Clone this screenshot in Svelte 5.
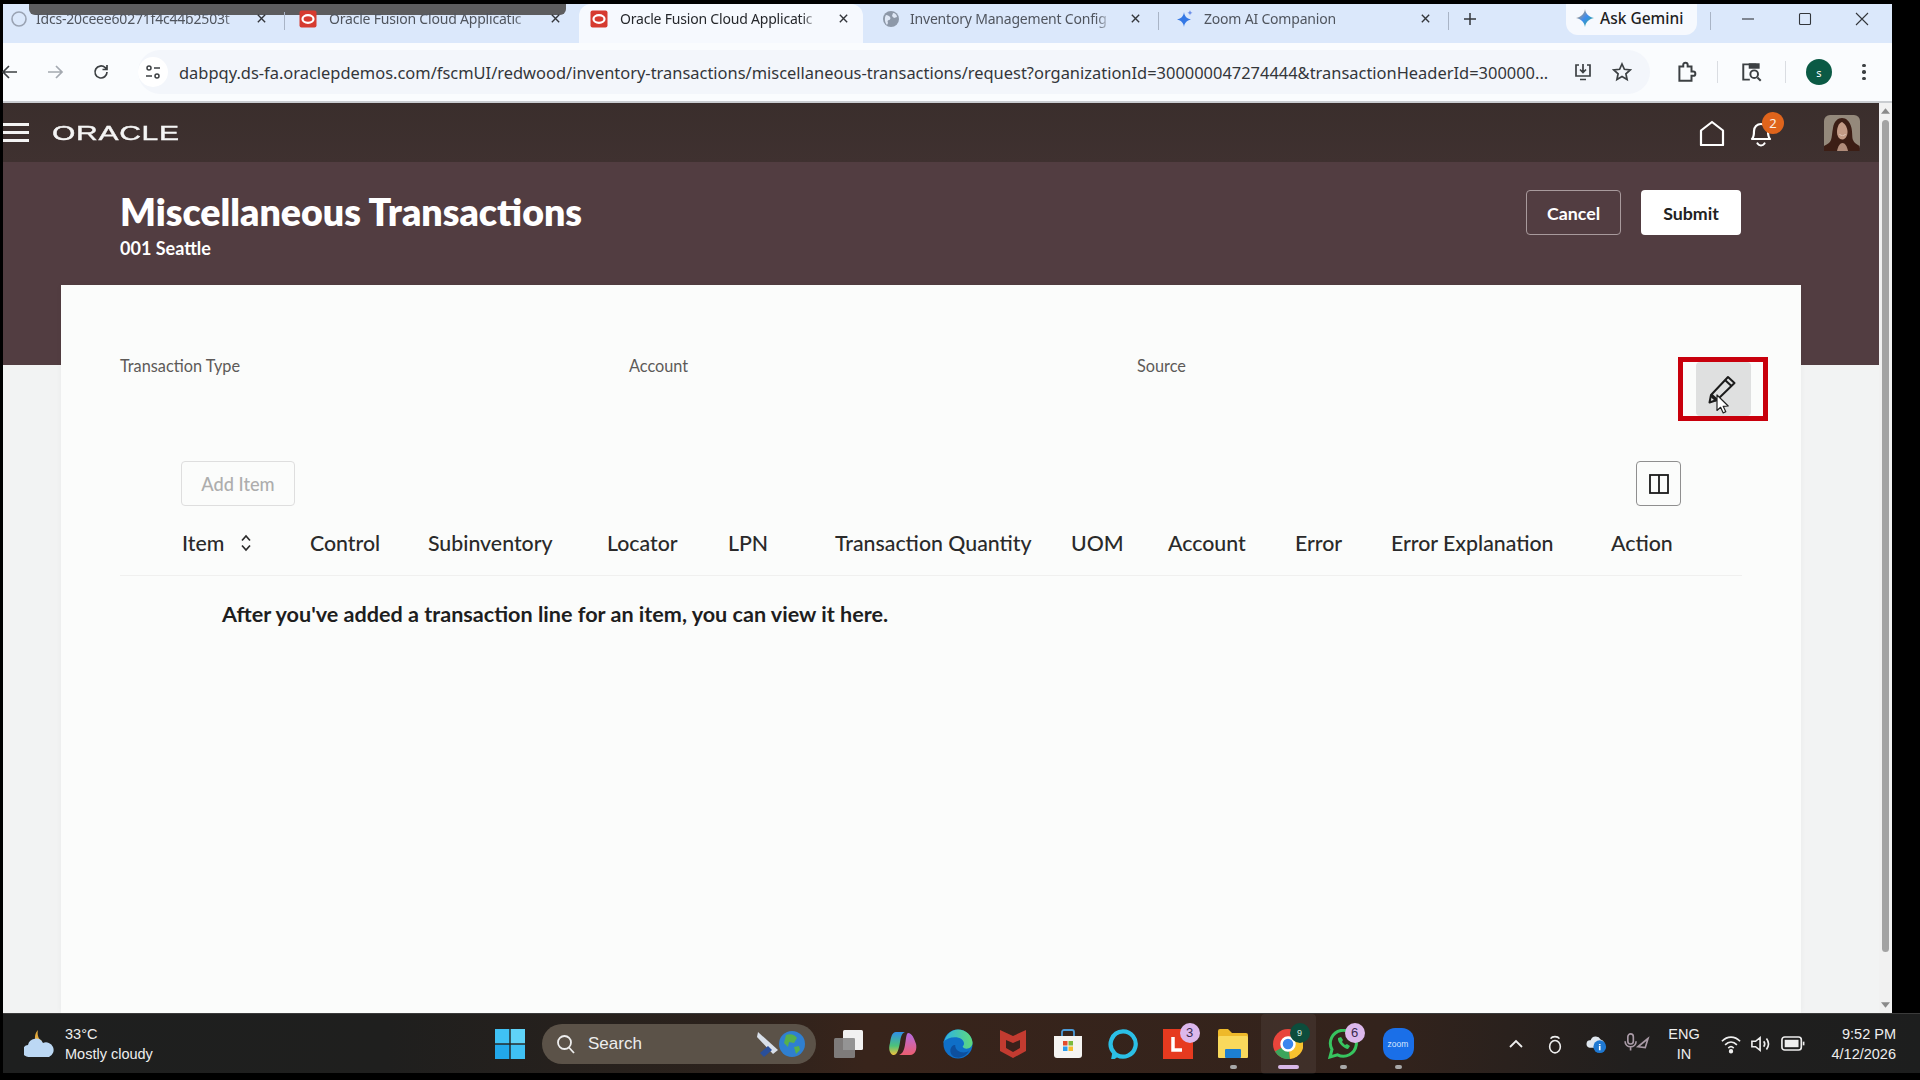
<script>
  const tabs = [
    { title: 'Idcs-20ceee60271f4c44b2503t', icon: 'ring', width: 282, pad: 7, gap: 8, sep: true },
    { title: 'Oracle Fusion Cloud Applicatic', icon: 'oracle', width: 294, pad: 14, gap: 12 },
    { title: 'Oracle Fusion Cloud Applicatic', icon: 'oracle', width: 284, pad: 11, gap: 12, active: true },
    { title: 'Inventory Management Config', icon: 'globe', width: 296, pad: 19, gap: 10, sep: true },
    { title: 'Zoom AI Companion', icon: 'spark', width: 290, pad: 17, gap: 10, sep: true }
  ];

  const columns = [
    { label: 'Item', sort: true },
    { label: 'Control' },
    { label: 'Subinventory' },
    { label: 'Locator' },
    { label: 'LPN' },
    { label: 'Transaction Quantity' },
    { label: 'UOM' },
    { label: 'Account' },
    { label: 'Error' },
    { label: 'Error Explanation' },
    { label: 'Action' }
  ];

  const url =
    'dabpqy.ds-fa.oraclepdemos.com/fscmUI/redwood/inventory-transactions/miscellaneous-transactions/request?organizationId=300000047274444&transactionHeaderId=300000...';
</script>

<div class="screen">
  <div class="chrome">
    <div class="tabstrip">
      <div class="share-bar"></div>
      {#each tabs as tab}
        <div class="tab" class:active={tab.active} class:sep={tab.sep} style="width:{tab.width}px;padding-left:{tab.pad}px;gap:{tab.gap}px">
          {#if tab.icon === 'oracle'}
            <svg class="fav" viewBox="0 0 18 18"><rect x="0.5" y="0.5" width="17" height="17" rx="2" fill="#d63b30" /><ellipse cx="9" cy="9" rx="5.5" ry="3.8" fill="none" stroke="#fff" stroke-width="2.2" /></svg>
          {:else if tab.icon === 'ring'}
            <svg class="fav" viewBox="0 0 18 18"><circle cx="9" cy="9" r="7" fill="none" stroke="#9aa3b3" stroke-width="1.6" /></svg>
          {:else if tab.icon === 'globe'}
            <svg class="fav" viewBox="0 0 18 18"><circle cx="9" cy="9" r="8" fill="#8d98a8" /><path d="M4 5c2 0 3 1 4 2s0 3-1 3-2 1-1 3l-1 2C3 13 2 8 4 5zM11 3c2 0 4 2 4 4l-3 1-2-2z" fill="#dfe8f6" /></svg>
          {:else}
            <svg class="fav" viewBox="0 0 18 18"><path d="M8 2c.5 4 2.500 6.500 7 7.500-4.500 1-6.500 3.500-7 7.500-.5-4-2.500-6.500-7-7.500 4.500-1 6.500-3.500 7-7.500z" fill="#3478e5" /><path d="M14 0c.2 1.600 1 2.400 2.500 2.800-1.500.4-2.300 1.200-2.500 2.700-.2-1.500-1-2.300-2.500-2.700 1.500-.4 2.300-1.200 2.500-2.800z" fill="#6d8fe8" /></svg>
          {/if}
          <span class="tab-title">{tab.title}</span>
          <svg class="tab-x" viewBox="0 0 12 12"><path d="M2 2l8 8M10 2l-8 8" /></svg>
        </div>
      {/each}
      <svg class="plus" viewBox="0 0 14 14"><path d="M7 1v12M1 7h12" /></svg>
      <div class="gemini">
        <svg viewBox="0 0 18 18" width="18" height="18">
          <defs><linearGradient id="gem" x1="0" y1="0" x2="1" y2="1"><stop offset="0" stop-color="#f2a33a" /><stop offset="0.5" stop-color="#3c8cf0" /><stop offset="1" stop-color="#2fb36c" /></linearGradient></defs>
          <path d="M9 0c.7 4.800 3.400 7.600 9 9-5.600 1.400-8.300 4.200-9 9-.7-4.800-3.400-7.600-9-9 5.600-1.400 8.300-4.200 9-9z" fill="url(#gem)" />
        </svg>
        <span>Ask Gemini</span>
      </div>
      <div class="win-sep"></div>
      <div class="win-btns">
        <svg viewBox="0 0 14 14"><path d="M1 7h12" /></svg>
        <svg viewBox="0 0 14 14"><rect x="1.500" y="1.500" width="11" height="11" rx="1" /></svg>
        <svg viewBox="0 0 14 14"><path d="M1 1l12 12M13 1L1 13" /></svg>
      </div>
    </div>

    <div class="toolbar">
      <div class="nav-btns">
        <svg viewBox="0 0 18 18" class="back"><path d="M16 9H2M8 3L2 9l6 6" /></svg>
        <svg viewBox="0 0 18 18" class="forward"><path d="M2 9h14M10 3l6 6-6 6" /></svg>
        <svg viewBox="0 0 18 18" class="reload"><path d="M15 9a6 6 0 1 1-1.800-4.300L15 6.500M15 2v4.500h-4.500" /></svg>
      </div>
      <div class="omnibox">
        <span class="tune">
          <svg viewBox="0 0 16 16" width="16" height="16"><circle cx="4" cy="4" r="2" /><path d="M9 4h6M1 12h6" /><circle cx="12" cy="12" r="2" /></svg>
        </span>
        <span class="url">{url}</span>
        <svg class="omni-ico" viewBox="0 0 20 20"><path d="M6 3H3v11h14V3h-3M10 2v8M7 7.500l3 3 3-3M7 17.500h6" /></svg>
        <svg class="omni-ico star" viewBox="0 0 20 20"><path d="M10 2l2.400 5.300 5.800.6-4.300 3.900 1.200 5.700L10 14.600l-5.100 2.900 1.200-5.700L1.800 7.900l5.800-.6z" /></svg>
      </div>
      <div class="tool-right">
        <svg class="ext" viewBox="0 0 20 20"><path d="M4 5h3.500V3.500a2 2 0 0 1 4 0V5H15v4.500h1.500a2 2 0 0 1 0 4H15V18H4z" /></svg>
        <i class="tool-sep"></i>
        <svg class="panel" viewBox="0 0 22 20"><path d="M9 17H3V3h11v1" /><rect x="8" y="2" width="10" height="5" fill="#3c4043" stroke="none" /><circle cx="13" cy="12" r="3.500" /><path d="M16 15l3 3" /></svg>
        <i class="tool-sep second"></i>
        <span class="profile">s</span>
        <span class="dots"><i></i><i></i><i></i></span>
      </div>
    </div>

    <div class="app">
      <div class="page">
        <header class="topbar">
          <div class="burger"><i></i><i></i><i></i></div>
          <span class="logo">ORACLE</span>
          <div class="top-icons">
            <svg class="home" viewBox="0 0 26 26"><path d="M2 25V10.500L13 2l11 8.500V25z" /></svg>
            <span class="bell">
              <svg viewBox="0 0 26 28"><path d="M4 20c2-2 2-4 2-8 0-4 3-7 7-7s7 3 7 7c0 4 0 6 2 8zM9.500 24.500c1 1.500 2.200 2 3.500 2s2.500-.5 3.500-2" /></svg>
              <span class="badge">2</span>
            </span>
            <svg class="avatar" viewBox="0 0 36 36">
              <rect width="36" height="36" rx="6" fill="#94897b" />
              <path d="M0 36V31c3-2 6-3 7-6 1-3 1-7 2-12 1-7 5-10 9-10s8 3 9.500 10c1 5 .5 10 1.500 12 1 3 4 4 6.500 6v5z" fill="#3c1e15" />
              <path d="M13 17c0-5 2-9 5-10 2 1 5 4 5.500 9 .3 4-1.500 8-5 8.500-3 .2-5.500-3-5.500-7.500z" fill="#c39a85" />
              <path d="M15 19c2 1.500 5 1.500 7 0-1 2-6 2-7 0z" fill="#f2e6de" />
              <path d="M13 36c1-5 3-8 5.500-8s4.500 3 5.500 8z" fill="#b08c7a" />
            </svg>
          </div>
        </header>

        <section class="hero">
          <div>
            <h1>Miscellaneous Transactions</h1>
            <p class="org">001 Seattle</p>
          </div>
          <div class="hero-actions">
            <button class="btn-outline">Cancel</button>
            <button class="btn-solid">Submit</button>
          </div>
        </section>

        <main class="card">
          <div class="fields">
            <div class="labels">
              <span>Transaction Type</span>
              <span>Account</span>
              <span>Source</span>
            </div>
            <div class="callout">
              <div class="edit-btn">
                <svg viewBox="0 0 55 54" width="55" height="54">
                  <path d="M32 15l6.500 6L21 38l-7.500 2.500L15 33z" fill="none" stroke="#1c1c1c" stroke-width="2" stroke-linejoin="round" />
                  <path d="M29 18l6.500 6" stroke="#1c1c1c" stroke-width="2" />
                  <path d="M15 33l6 5.500" stroke="#1c1c1c" stroke-width="3.500" />
                  <path d="M21 33v15.500l3.600-3.200 2.600 5.600 2.600-1.200-2.600-5.400 5-.3z" fill="#fff" stroke="#222" stroke-width="1.200" stroke-linejoin="round" />
                </svg>
              </div>
            </div>
          </div>

          <div class="actions">
            <button class="add-item">Add Item</button>
            <button class="col-btn" aria-label="Columns">
              <svg viewBox="0 0 20 20" width="20" height="20"><rect x="1" y="1" width="18" height="18" /><path d="M10 1v18" /></svg>
            </button>
          </div>

          <div class="thead">
            {#each columns as col}
              <div class="th">
                {col.label}
                {#if col.sort}
                  <svg class="sort" viewBox="0 0 12 18"><path d="M2 6.500L6 2l4 4.500M2 11.500L6 16l4-4.500" /></svg>
                {/if}
              </div>
            {/each}
          </div>
          <p class="empty">After you've added a transaction line for an item, you can view it here.</p>
        </main>
      </div>

      <div class="scrollbar">
        <svg viewBox="0 0 10 6" class="arrow"><path d="M5 0l5 6H0z" /></svg>
        <div class="thumb"></div>
        <svg viewBox="0 0 10 6" class="arrow"><path d="M0 0h10L5 6z" /></svg>
      </div>
    </div>
  </div>

  <footer class="taskbar">
    <div class="weather">
      <svg viewBox="0 0 32 30" width="32" height="30">
        <path d="M14 1c-3 3-4 8-2 12l6-1C14 10 13 5 14 1z" fill="#e2a83c" />
        <path d="M5 28a6 6 0 0 1-1-12 8 8 0 0 1 15-2 7 7 0 0 1 6 14z" fill="#bcd8f4" />
      </svg>
      <div class="weather-text"><span>33°C</span><span>Mostly cloudy</span></div>
    </div>

    <svg class="winlogo" viewBox="0 0 30 30">
      <rect width="14.300" height="14.300" fill="#3fc1f4" />
      <rect x="15.700" width="14.300" height="14.300" fill="#5fd3f8" />
      <rect y="15.700" width="14.300" height="14.300" fill="#22a8ea" />
      <rect x="15.700" y="15.700" width="14.300" height="14.300" fill="#3fc1f4" />
    </svg>

    <div class="search">
      <svg viewBox="0 0 20 20" width="20" height="20"><circle cx="8.500" cy="8.500" r="6.500" /><path d="M13 13.500l5 5.500" /></svg>
      <span>Search</span>
      <svg class="search-art" viewBox="0 0 50 30" width="50" height="30">
        <path d="M2 3l20 18-5 4L1 8z" fill="#d9e0ea" />
        <path d="M4 24l8-7 4 4-8 7z" fill="#2a4f9a" />
        <circle cx="36" cy="15" r="13" fill="#2f7fd0" />
        <path d="M30 6c5-2 9 0 11 3l-3 5-5-1-1 5-4-4zM38 18l5-1 1 4-4 4z" fill="#56b04c" />
      </svg>
    </div>

    <div class="apps">
      <span class="app-slot">
        <svg viewBox="0 0 30 30"><rect x="10" y="1" width="20" height="20" rx="1.500" fill="#f1f1f1" /><rect x="10" y="9" width="12" height="12" fill="#c9c9c9" /><rect x="1" y="9" width="21" height="20" rx="1.500" fill="#8b8b8b" opacity="0.850" /></svg>
      </span>
      <span class="app-slot">
        <svg viewBox="0 0 30 30">
          <defs>
            <linearGradient id="cpa" x1="0" y1="0" x2="0" y2="1"><stop offset="0" stop-color="#2f8fe8" /><stop offset="0.600" stop-color="#4cc27a" /><stop offset="1" stop-color="#f4c23c" /></linearGradient>
            <linearGradient id="cpb" x1="0" y1="0" x2="0" y2="1"><stop offset="0" stop-color="#b56be0" /><stop offset="1" stop-color="#ec5e70" /></linearGradient>
          </defs>
          <path d="M8 3h9c-3 1-4 4-5 10-1 7-3 14-7 13-3-1-5-6-3-12C3 8 4 3 8 3z" fill="url(#cpa)" />
          <path d="M20 4c4 0 6 5 8 11 1 4 0 11-6 11h-11c3-1 5-4 6-10 1-5 1-11 3-12z" fill="url(#cpb)" />
        </svg>
      </span>
      <span class="app-slot">
        <svg viewBox="0 0 32 32">
          <defs>
            <linearGradient id="edg" x1="0" y1="0" x2="1" y2="0"><stop offset="0" stop-color="#2bb0e8" /><stop offset="1" stop-color="#5fd97c" /></linearGradient>
          </defs>
          <circle cx="16" cy="16" r="15.500" fill="#0f6fc8" />
          <path d="M1 14C3 6 9 .5 16 .5c8 0 15 6 15.500 14 .2 4-3 6.500-6.500 6.500-2 0-4-1-4-2.500 2-1 2-5-1-7.500-6-4-15-2-20 3z" fill="url(#edg)" />
          <path d="M13 17c0 5 4 8 9 8 2 0 4-.5 6-2-3 5-8 8-13 7.500-5-.5-8-5-7-9 .5-2.500 3-5 5-4.500z" fill="#0d4f9e" />
        </svg>
      </span>
      <span class="app-slot">
        <svg viewBox="0 0 30 30"><path d="M2 1l13 6 13-6v21l-13 7-13-7z" fill="#c23b30" /><path d="M8 11l7 3 7-3v8l-7 4-7-4z" fill="#3a211b" /></svg>
      </span>
      <span class="app-slot">
        <svg viewBox="0 0 30 30"><path d="M1 7h28v19a3 3 0 0 1-3 3H4a3 3 0 0 1-3-3z" fill="#f5f4f2" /><path d="M9 7V3a2 2 0 0 1 2-2h8a2 2 0 0 1 2 2v4" fill="none" stroke="#4b9bd8" stroke-width="1.800" /><rect x="10" y="12" width="4.500" height="4.500" fill="#e44d2e" /><rect x="15.500" y="12" width="4.500" height="4.500" fill="#7cba3e" /><rect x="10" y="17.500" width="4.500" height="4.500" fill="#2c9cec" /><rect x="15.500" y="17.500" width="4.500" height="4.500" fill="#f6bb2e" /></svg>
      </span>
      <span class="app-slot">
        <svg viewBox="0 0 32 32"><path d="M16 2.500a13.500 13.500 0 1 1-6.500 25.300L6 30l.8-4.500A13.500 13.500 0 0 1 16 2.500z" fill="none" stroke="#2bbfe6" stroke-width="4.500" /></svg>
      </span>
      <span class="app-slot">
        <svg viewBox="0 0 30 30"><rect width="30" height="30" fill="#e63a1f" /><path d="M10 8v13h9" fill="none" stroke="#fff" stroke-width="3.500" /></svg>
        <span class="app-badge">3</span>
      </span>
      <span class="app-slot">
        <svg viewBox="0 0 30 30"><path d="M0 2a2 2 0 0 1 2-2h8l4 4h14a2 2 0 0 1 2 2v21a2 2 0 0 1-2 2H2a2 2 0 0 1-2-2z" fill="#eeb92a" /><rect y="7" width="30" height="22" rx="1.500" fill="#f9d95c" /><rect x="7" y="20" width="16" height="9" rx="1" fill="#1c7fd0" /></svg>
        <i class="run-dot"></i>
      </span>
      <span class="app-slot current">
        <svg viewBox="0 0 30 30"><circle cx="15" cy="15" r="15" fill="#e8453c" /><path d="M15 15L2 22.500A15 15 0 0 0 17 30z" fill="#3ba55c" /><path d="M15 7.500h13.500A15 15 0 0 1 17 30z" fill="#f8c22e" /><circle cx="15" cy="15" r="6.500" fill="#3a86ee" stroke="#fff" stroke-width="2.500" /></svg>
        <span class="app-badge dark">9</span>
        <i class="run-bar"></i>
      </span>
      <span class="app-slot">
        <svg viewBox="0 0 30 30"><path d="M2 28l2-7.500a13 13 0 1 1 5.500 5.300z" fill="none" stroke="#37c45f" stroke-width="3" /><path d="M10 9c-1 4 6 11 10 11l2-3-3-2-2 1-3-3 1-2-2-3z" fill="#37c45f" /></svg>
        <span class="app-badge">6</span>
        <i class="run-dot"></i>
      </span>
      <span class="app-slot">
        <span class="zoom-ico">zoom</span>
        <i class="run-dot"></i>
      </span>
    </div>

    <div class="tray">
      <svg viewBox="0 0 14 10" width="14" height="10"><path d="M1 8l6-6 6 6" /></svg>
      <svg viewBox="0 0 18 24" width="16" height="22"><ellipse cx="9" cy="15" rx="6" ry="7" /><path d="M4 6c2-3 8-3 10 0" /></svg>
      <svg viewBox="0 0 24 22" width="22" height="20" class="filled"><path d="M4 15a4 4 0 0 1 1-8 6 6 0 0 1 11-1 5 5 0 0 1 2 9z" fill="#dfe6ee" stroke="none" /><circle cx="15" cy="14" r="7" fill="#1e78d2" stroke="none" /><path d="M15 11v1M15 13v5" stroke="#fff" /></svg>
      <svg viewBox="0 0 28 24" width="26" height="22" class="muted"><rect x="4" y="1" width="6" height="11" rx="3" /><path d="M1 9c0 4 3 6 6 6s6-2 6-6M7 15v4" /><path d="M26 6L15 15l8 1 3-10z" /></svg>
      <div class="lang"><span>ENG</span><span>IN</span></div>
      <svg viewBox="0 0 24 22" width="22" height="20"><path d="M2 8c6-6 14-6 20 0M5.500 12c4-4 9-4 13 0M9 15.500c2-2 4-2 6 0" /><circle cx="12" cy="19" r="1.500" fill="#eee" /></svg>
      <svg viewBox="0 0 24 22" width="22" height="20"><path d="M2 8v6h4l5 4V4L6 8zM15 8c1.500 2 1.500 4 0 6M18 5c3 4 3 8 0 12" /></svg>
      <svg viewBox="0 0 26 16" width="24" height="15"><rect x="1" y="1" width="21" height="14" rx="3" /><rect x="4" y="4" width="15" height="8" fill="#eee" stroke="none" /><path d="M24.500 6v4" /></svg>
      <div class="clock"><span>9:52 PM</span><span>4/12/2026</span></div>
    </div>
  </footer>
</div>

<style>
  :global(body) { margin: 0; background: #000; }

  .screen {
    width: 1920px;
    height: 1080px;
    box-sizing: border-box;
    background: #000;
    padding: 4px 0 7px 3px;
    display: flex;
    flex-direction: column;
    overflow: hidden;
    font-family: "Noto Sans", sans-serif;
  }
  .chrome { width: 1889px; flex: 1; display: flex; flex-direction: column; min-height: 0; }

  /* tab strip */
  .tabstrip {
    height: 39px;
    background: #dbe8fb;
    display: flex;
    position: relative;
    flex-shrink: 0;
  }
  .tab {
    box-sizing: border-box;
    display: flex;
    align-items: center;
    padding-right: 18px;
    padding-bottom: 10px;
    position: relative;
    color: #50555e;
    font-size: 14px;
    letter-spacing: -0.200px;
  }
  .tab.sep::after {
    content: '';
    position: absolute;
    right: 0;
    top: 8px;
    height: 18px;
    width: 1px;
    background: #a9b4c6;
  }
  .tab.active {
    background: #f6f9fe;
    border-radius: 12px 12px 0 0;
    color: #26282c;
    padding-right: 14px;
  }
  .fav { width: 18px; height: 18px; flex-shrink: 0; }
  .tab-title {
    flex: 1;
    min-width: 0;
    white-space: nowrap;
    mask-image: linear-gradient(to right, #000 92%, transparent);
    -webkit-mask-image: linear-gradient(to right, #000 92%, transparent);
  }
  .tab-x { width: 11px; height: 11px; flex-shrink: 0; margin-left: 8px; }
  .tab-x path { stroke: #33363b; stroke-width: 1.500; fill: none; }
  .plus { width: 14px; height: 14px; margin: 8px 0 0 14px; }
  .plus path { stroke: #33363b; stroke-width: 1.500; fill: none; }
  .share-bar {
    position: absolute;
    left: 26px;
    top: 0;
    width: 537px;
    height: 11px;
    background: #5c5c5e;
    border-radius: 0 0 6px 6px;
  }
  .gemini {
    position: absolute;
    left: 1563px;
    top: 0;
    width: 131px;
    height: 31px;
    box-sizing: border-box;
    background: #f6f9fe;
    border-radius: 0 0 12px 12px;
    display: flex;
    align-items: center;
    gap: 6px;
    padding: 0 0 3px 10px;
    font-size: 15.500px;
    color: #1f1f1f;
    font-weight: 500;
  }
  .win-sep { position: absolute; left: 1707px; top: 8px; height: 18px; width: 1px; background: #a9b4c6; }
  .win-btns { position: absolute; left: 1738px; top: 8px; display: flex; gap: 43px; }
  .win-btns svg { width: 14px; height: 14px; }
  .win-btns path, .win-btns rect { fill: none; stroke: #33363b; stroke-width: 1.100; }

  /* address bar */
  .toolbar {
    height: 58px;
    background: #fafcfe;
    border-bottom: 2px solid #c9ccd0;
    display: flex;
    align-items: center;
    flex-shrink: 0;
  }
  .nav-btns { display: flex; width: 135px; flex-shrink: 0; align-items: center; }
  .nav-btns svg { width: 18px; height: 18px; fill: none; stroke-width: 1.700; }
  .back { margin-left: -2px; stroke: #3c4043; }
  .forward { margin-left: 27px; stroke: #a4a9b0; }
  .reload { margin-left: 28px; stroke: #3c4043; }
  .omnibox {
    width: 1512px;
    height: 44px;
    border-radius: 22px;
    background: #f3f6fb;
    display: flex;
    align-items: center;
    flex-shrink: 0;
    position: relative;
  }
  .tune {
    width: 30px;
    height: 30px;
    flex-shrink: 0;
    background: #fff;
    border-radius: 50%;
    display: flex;
    align-items: center;
    justify-content: center;
  }
  .tune circle, .tune path { fill: none; stroke: #3c4043; stroke-width: 1.500; }
  .url {
    margin-left: 11px;
    font-size: 16.450px;
    color: #33363a;
    white-space: nowrap;
    width: 1372px;
    flex-shrink: 0;
  }
  .omni-ico { width: 20px; height: 20px; flex-shrink: 0; fill: none; stroke: #3c4043; stroke-width: 1.700; margin-left: 22px; }
  .omni-ico.star { margin-left: 19px; }
  .tool-right { display: flex; align-items: center; flex: 1; min-width: 0; position: relative; }
  .ext { width: 22px; height: 22px; fill: none; stroke: #3c4043; stroke-width: 1.800; margin-left: 25px; flex-shrink: 0; }
  .tool-sep { width: 1px; height: 22px; background: #dadde2; margin-left: 20px; flex-shrink: 0; }
  .tool-sep.second { margin-left: 21px; }
  .panel { width: 24px; height: 22px; fill: none; stroke: #3c4043; stroke-width: 1.800; margin-left: 22px; flex-shrink: 0; }
  .profile {
    width: 26px;
    height: 26px;
    border-radius: 50%;
    background: #0b5a45;
    color: #fff;
    font-size: 11px;
    display: flex;
    align-items: center;
    justify-content: center;
    margin-left: 20px;
    flex-shrink: 0;
  }
  .dots { display: flex; flex-direction: column; gap: 3px; margin-left: 30px; }
  .dots i { width: 3.500px; height: 3.500px; border-radius: 50%; background: #3c4043; }

  /* app frame */
  .app { flex: 1; display: flex; min-height: 0; }
  .page { flex: 1; min-width: 0; background: #f2f3f3; display: flex; flex-direction: column; }
  .scrollbar {
    width: 13px;
    background: #f1f1f1;
    display: flex;
    flex-direction: column;
    align-items: center;
    padding: 5px 0;
    box-sizing: border-box;
    gap: 6px;
  }
  .arrow { width: 9px; height: 6px; fill: #8a8a8a; flex-shrink: 0; }
  .thumb { width: 7px; flex: 1; background: #a3a3a3; border-radius: 4px; margin-bottom: 44px; }

  .topbar {
    height: 59px;
    background: linear-gradient(#3a2e2c, #3f3130);
    display: flex;
    align-items: center;
    flex-shrink: 0;
  }
  .burger { width: 26px; display: flex; flex-direction: column; gap: 5px; }
  .burger i { height: 3px; background: #f4f4f4; }
  .logo {
    display: inline-block;
    margin-left: 23px;
    font-family: "Liberation Sans", sans-serif;
    font-size: 21px;
    color: #f5f5f5;
    line-height: 1;
    transform: scaleX(1.430);
    transform-origin: left center;
    letter-spacing: 0.500px;
    -webkit-text-stroke: 0.400px #f5f5f5;
  }
  .top-icons { margin-left: auto; display: flex; align-items: center; padding-right: 19px; }
  .home { width: 26px; height: 26px; fill: none; stroke: #fff; stroke-width: 2.200; stroke-linejoin: round; }
  .bell { position: relative; width: 26px; height: 28px; margin-left: 23.500px; }
  .bell svg { width: 26px; height: 28px; fill: none; stroke: #fff; stroke-width: 2.200; stroke-linejoin: round; stroke-linecap: round; }
  .badge {
    position: absolute;
    left: 14px;
    top: -7px;
    width: 22px;
    height: 22px;
    border-radius: 50%;
    background: #df641c;
    color: #fdeee2;
    font-size: 13px;
    display: flex;
    align-items: center;
    justify-content: center;
  }
  .avatar { width: 36px; height: 36px; margin-left: 50px; filter: blur(0.700px); }

  .hero {
    height: 203px;
    flex-shrink: 0;
    box-sizing: border-box;
    background: #523d41;
    padding: 28px 138px 0 117px;
    display: flex;
    justify-content: space-between;
    align-items: flex-start;
  }
  h1 {
    margin: 0;
    font-family: Lato, sans-serif;
    font-size: 37.500px;
    line-height: 44px;
    font-weight: 800;
    color: #fff;
  }
  .org {
    margin: 3px 0 0;
    font-size: 18px;
    line-height: 22px;
    font-weight: 700;
    color: #fff;
    font-family: Lato, sans-serif;
  }
  .hero-actions { display: flex; gap: 20px; }
  .hero-actions button {
    height: 45px;
    border-radius: 4px;
    font-family: Lato, sans-serif;
    font-size: 17.800px;
    font-weight: 700;
  }
  .btn-outline { width: 95px; background: transparent; border: 1.500px solid #a89a9c; color: #fff; }
  .btn-solid { width: 100px; background: #fff; border: 0; color: #222; }

  .card {
    flex: 1;
    margin: -80px 0 0 58px;
    width: 1740px;
    background: #fbfcfb;
    display: flex;
    flex-direction: column;
    min-height: 0;
    box-shadow: 0 0 6px rgba(0, 0, 0, 0.040);
  }
  .fields { display: flex; margin-top: 72px; padding-left: 59px; }
  .labels {
    width: 1558px;
    display: grid;
    grid-template-columns: 509px 508px 1fr;
    font-family: Lato, sans-serif;
    font-size: 16.300px;
    line-height: 18px;
    color: #5d5a58;
    align-self: flex-start;
  }
  .callout {
    width: 90px;
    height: 64px;
    box-sizing: border-box;
    border: 5px solid #c8000c;
    display: flex;
    justify-content: center;
    flex-shrink: 0;
  }
  .edit-btn { width: 55px; background: #dfe0e0; border-radius: 4px; display: flex; overflow: hidden; }

  .actions { display: flex; justify-content: space-between; margin-top: 40px; padding: 0 120px; }
  .add-item {
    width: 114px;
    height: 45px;
    background: transparent;
    border: 1.500px solid #dedede;
    border-radius: 4px;
    color: #adadad;
    font-family: Lato, sans-serif;
    font-size: 18.200px;
    font-weight: 500;
  }
  .col-btn {
    width: 45px;
    height: 45px;
    padding: 0;
    background: transparent;
    border: 1.500px solid #8f8f8f;
    border-radius: 4px;
    display: flex;
    align-items: center;
    justify-content: center;
  }
  .col-btn rect, .col-btn path { fill: none; stroke: #1a1a1a; stroke-width: 1.800; }

  .thead {
    margin: 4px 59px 0;
    height: 66px;
    box-sizing: border-box;
    padding-left: 62px;
    display: grid;
    grid-template-columns: 128px 118px 179px 121px 107px 236px 97px 127px 96px 220px 1fr;
    align-items: center;
    border-bottom: 1.500px solid #f0f0ef;
  }
  .th {
    display: flex;
    align-items: center;
    gap: 16px;
    font-family: Lato, sans-serif;
    font-size: 21.300px;
    font-weight: 500;
    color: #2a2a2a;
    white-space: nowrap;
  }
  .sort { width: 12px; height: 18px; fill: none; stroke: #2a2a2a; stroke-width: 1.700; }
  .empty {
    margin: 26px 0 0 161px;
    font-family: Lato, sans-serif;
    font-size: 21.600px;
    line-height: 24px;
    font-weight: 700;
    color: #1e1e1e;
  }

  /* windows taskbar */
  .taskbar {
    height: 60px;
    flex-shrink: 0;
    display: flex;
    align-items: center;
    background: linear-gradient(90deg, #1e1f1f 0%, #1f1f1e 20%, #2c221c 38%, #38241b 45%, #33231c 72%, #211f1e 85%, #1d1e1e 100%);
    color: #eee;
    border-top: 1px solid #3b3b3b;
    box-sizing: border-box;
    font-family: "Liberation Sans", sans-serif;
  }
  .weather { width: 482px; padding-left: 21px; box-sizing: border-box; display: flex; align-items: center; gap: 9px; flex-shrink: 0; }
  .weather-text { display: flex; flex-direction: column; font-size: 14.500px; line-height: 20px; }
  .winlogo { width: 30px; height: 30px; margin-left: 10px; flex-shrink: 0; }
  .search {
    width: 274px;
    height: 40px;
    margin-left: 17px;
    border-radius: 20px;
    background: #5b5248;
    display: flex;
    align-items: center;
    padding-left: 14px;
    box-sizing: border-box;
    gap: 12px;
    font-size: 17px;
    color: #eee;
    flex-shrink: 0;
  }
  .search svg:first-child { fill: none; stroke: #eee; stroke-width: 1.800; }
  .search-art { margin-left: auto; margin-right: 10px; }
  .apps { display: flex; margin-left: 4.500px; flex-shrink: 0; }
  .app-slot { width: 55px; height: 60px; display: flex; align-items: center; justify-content: center; position: relative; }
  .app-slot > svg { width: 30px; height: 30px; }
  .app-slot.current { background: rgba(255, 255, 255, 0.060); border-radius: 4px; }
  .app-badge {
    position: absolute;
    top: 9px;
    left: 29px;
    width: 20px;
    height: 20px;
    border-radius: 50%;
    background: #dcb8ec;
    color: #3a2a50;
    font-size: 13px;
    display: flex;
    align-items: center;
    justify-content: center;
  }
  .app-badge.dark { background: #0c4d3c; color: #d6e8df; font-size: 9px; }
  .run-dot { position: absolute; bottom: 5px; left: 24px; width: 7px; height: 4px; background: #a8a8a8; border-radius: 2px; }
  .run-bar { position: absolute; bottom: 5px; left: 17px; width: 21px; height: 4px; background: #d8b8e8; border-radius: 2px; }
  .zoom-ico {
    width: 31px;
    height: 32px;
    border-radius: 12px;
    background: #1a6fe8;
    color: #d6e6ff;
    font-size: 8.500px;
    display: flex;
    align-items: center;
    justify-content: center;
  }
  .tray {
    margin-left: auto;
    width: 424px;
    flex-shrink: 0;
    display: grid;
    grid-template-columns: 40px 38px 46px 34px 60px 34px 26px 38px 1fr;
    justify-items: center;
    align-items: center;
  }
  .tray svg { fill: none; stroke: #eee; stroke-width: 1.800; }
  .tray svg.muted { stroke: #a99aa6; }
  .lang { display: flex; flex-direction: column; align-items: center; font-size: 14.500px; line-height: 20px; }
  .clock {
    justify-self: end;
    padding-right: 24px;
    display: flex;
    flex-direction: column;
    align-items: flex-end;
    font-size: 14.500px;
    line-height: 20px;
    white-space: nowrap;
  }
</style>
